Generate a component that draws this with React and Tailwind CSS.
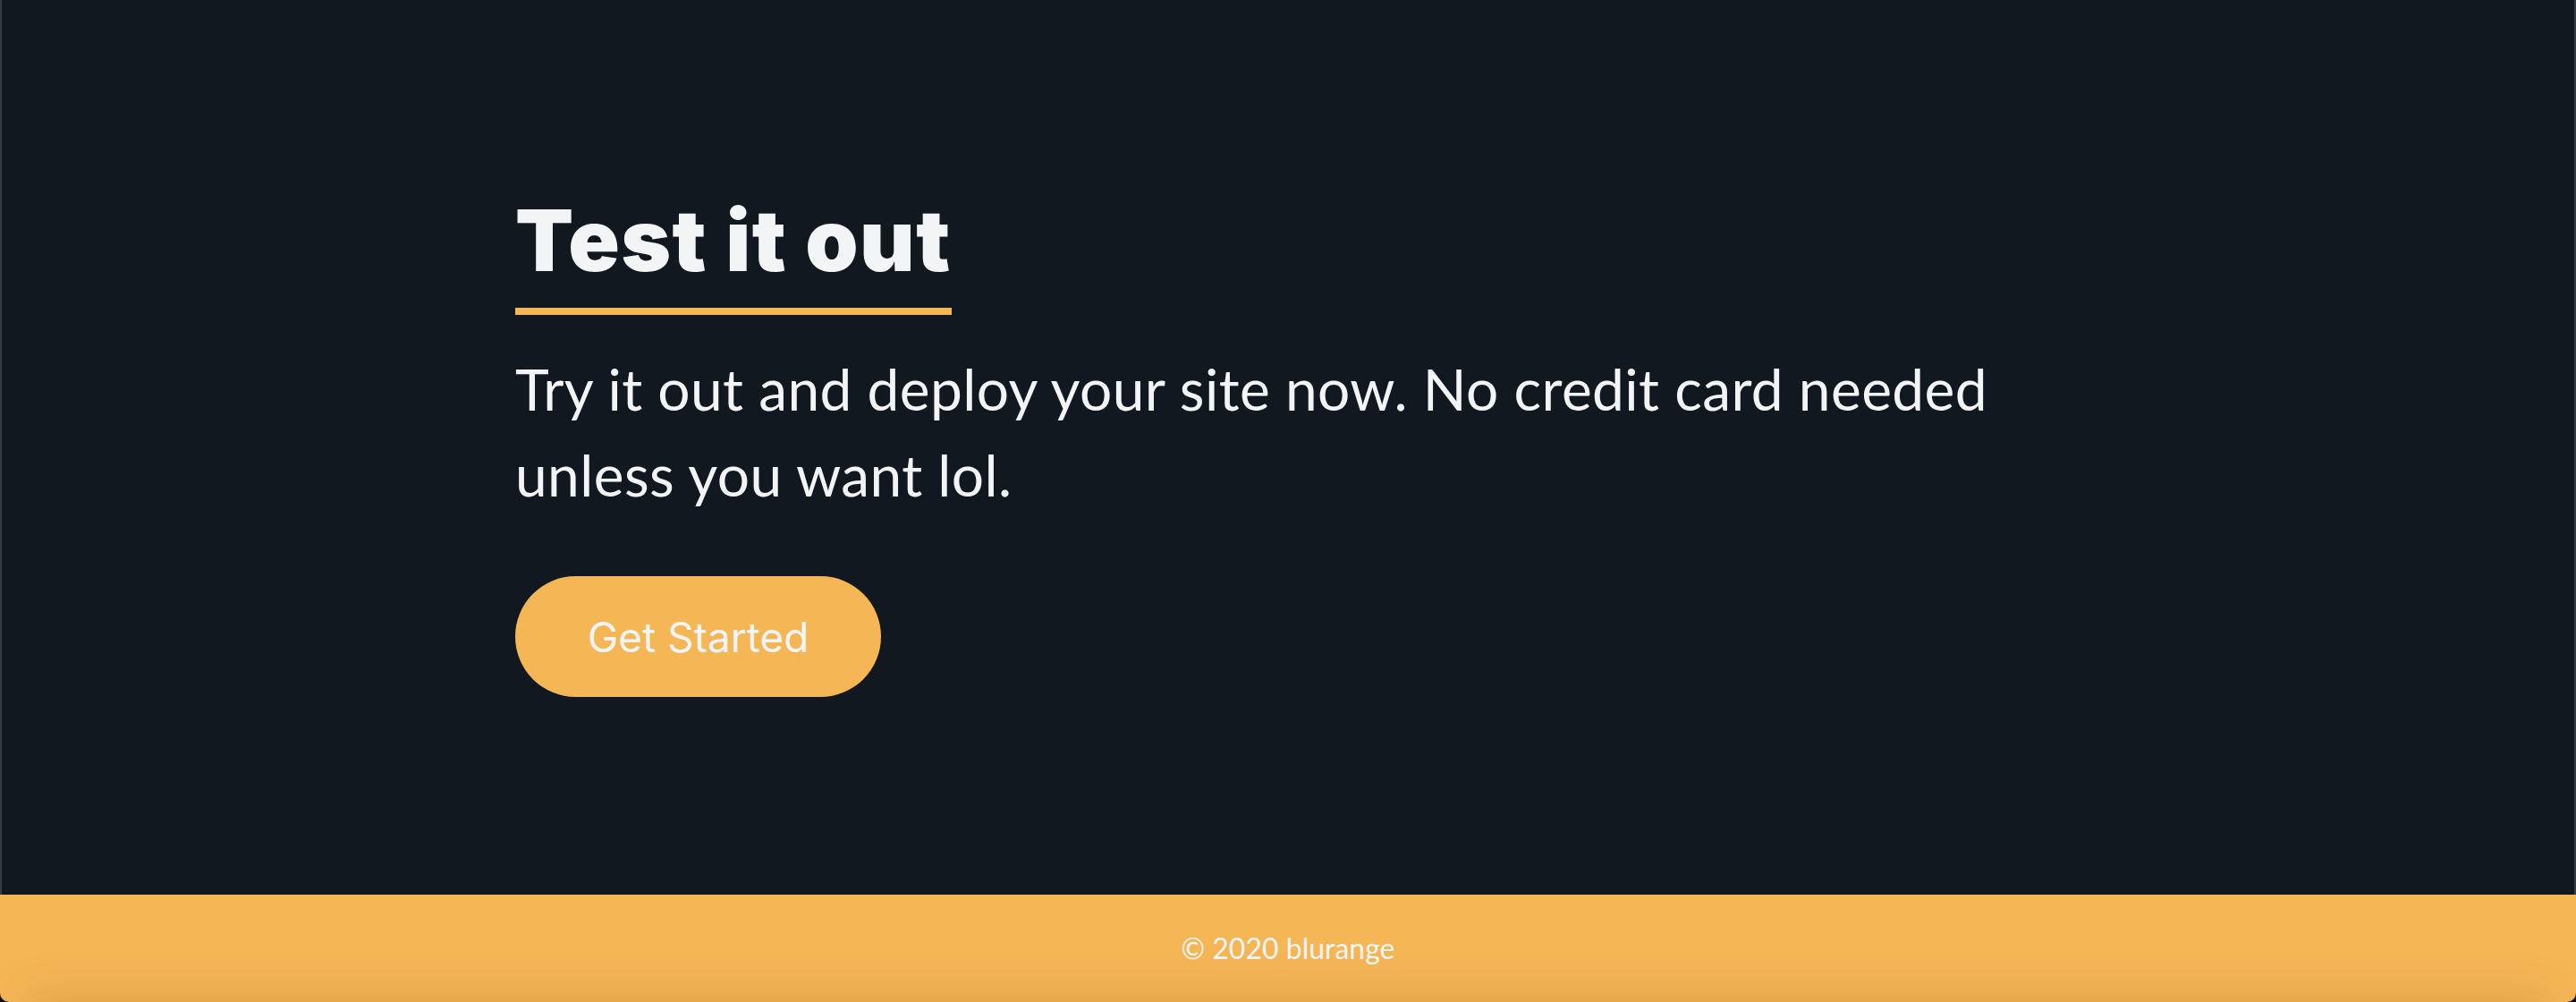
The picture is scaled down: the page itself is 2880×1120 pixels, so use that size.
export default function App() {
  return (
    <div className="min-h-screen w-full bg-[#0b0e13] flex flex-col font-['Lato',sans-serif]">
      {/* Call to action */}
      <section className="h-[1000px] bg-[#121820] border-x-2 border-[#363b44]">
        <div className="w-[1728px] mx-auto pt-[221px]">
          <h2 className="inline-block text-[95px] leading-[96px] font-black tracking-[1.4px] text-[#f3f4f6] font-['Inter',sans-serif] pb-[27px] border-b-8 border-[#f5b656]">
            Test it out
          </h2>
          <p className="mt-[35px] text-[64px] leading-[96px] tracking-[0.4px] text-[#f3f4f6] max-w-[1728px]">
            Try it out and deploy your site now. No credit card needed unless you want lol.
          </p>
          <button className="mt-[65px] h-[135px] px-[81px] flex items-center rounded-full bg-[#f5b656] text-[#f3f4f6] text-[46px] leading-[72px] font-['Inter',sans-serif]">
            Get Started
          </button>
        </div>
      </section>

      {/* Footer */}
      <footer className="relative h-[120px] overflow-hidden rounded-b-[10px] bg-[#f5b656] flex items-center justify-center">
        <div className="absolute left-[40px] right-[40px] top-full h-[40px] shadow-[0_0_50px_8px_rgba(120,70,0,0.18)]"></div>
        <p className="relative text-[32px] text-[#f3f4f6]">© 2020 blurange</p>
      </footer>
    </div>
  );
}
